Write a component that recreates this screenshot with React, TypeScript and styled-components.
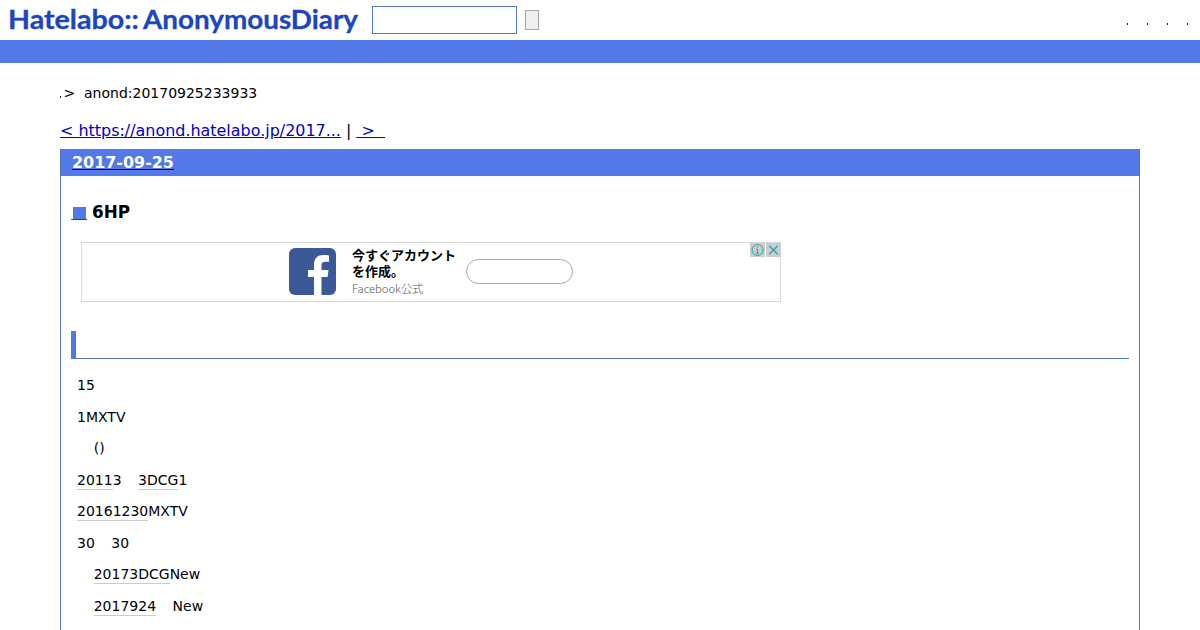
import React from 'react';
import styled, { createGlobalStyle } from 'styled-components';

const GlobalStyle = createGlobalStyle`
  html {
    overflow: hidden;
  }
  body {
    margin: 0;
    background: #fff;
    color: #000;
    font-family: 'DejaVu Sans', sans-serif;
    font-size: 14px;
  }
`;

const Page = styled.div`
  height: 630px;
  overflow: hidden;
  display: flex;
  flex-direction: column;
`;

const Header = styled.header`
  display: flex;
  align-items: flex-start;
  flex: none;
  height: 40px;
`;
const Logo = styled.svg`
  display: block;
  width: 372px;
  height: 40px;
  fill: #1c45c0;
  stroke: #1c45c0;
  stroke-width: 0.3px;
  font-family: Lato, sans-serif;
  font-weight: 700;
`;
const SearchInput = styled.input`
  box-sizing: border-box;
  width: 145px;
  height: 28px;
  margin: 6px 8px 0 0;
  border: 1px solid #5279c7;
  padding: 0 4px;
`;
const SearchButton = styled.button`
  box-sizing: border-box;
  width: 14px;
  height: 20px;
  margin-top: 10px;
  padding: 0;
  border: 1px solid #a9a9a9;
  background: #efefef;
`;
const Menu = styled.nav`
  display: flex;
  gap: 19px;
  margin-left: auto;
  padding: 23px 12px 0 0;
`;
const Dot = styled.span`
  width: 1px;
  height: 2px;
  background: #222;
`;
const BlueBar = styled.div`
  flex: none;
  height: 23px;
  background: #5279e7;
`;

const Main = styled.main`
  flex: 1;
  min-height: 0;
  display: flex;
  flex-direction: column;
  padding: 22px 60px 0;
`;
const Breadcrumb = styled.div`
  display: flex;
  align-items: baseline;
  height: 17px;
  line-height: 17px;
  white-space: pre;

  ${Dot} {
    margin-right: 2.4px;
  }
`;
const Pager = styled.div`
  height: 19px;
  line-height: 19px;
  margin: 19px 0 9px;
  font-size: 15.94px;
  white-space: pre;

  a {
    color: #0000cc;
  }
`;

const Day = styled.section`
  flex: 1;
  min-height: 0;
  border: 1px solid #5279b7;
  border-top-color: #5279e7;
  border-bottom: 0;
`;
const DayTitle = styled.h2`
  height: 26px;
  margin: 0;
  padding-left: 11px;
  background: #5279e7;
  font-size: 15.94px;
  line-height: 25px;

  a {
    color: #fff;
    text-decoration-color: #0000cc;
  }
`;
const Entry = styled.article`
  padding: 25px 10px 0;
`;
const EntryTitle = styled.h3`
  display: flex;
  align-items: flex-start;
  gap: 5px;
  height: 20px;
  margin: 0;
  font-size: 16.8px;
  line-height: 22px;
`;
const Permalink = styled.a`
  width: 16px;
  margin-top: 6px;
  border-bottom: 1px solid #2a3fae;

  &::before {
    content: '';
    display: block;
    width: 13px;
    height: 12px;
    margin-left: 2px;
    background: #5279e7;
  }
`;

const Ad = styled.aside`
  box-sizing: border-box;
  position: relative;
  display: flex;
  width: 700px;
  height: 60px;
  margin: 21px 0 29px 10px;
  padding: 5px 0 0 207px;
  border: 1px solid #d8d8d8;
  font-family: 'Noto Sans CJK JP', sans-serif;
`;
const AdCopy = styled.div`
  width: 114px;
  margin: -1px 0 0 16px;
`;
const AdTitle = styled.div`
  width: 106px;
  font-size: 13px;
  font-weight: 700;
  line-height: 16px;
`;
const AdSponsor = styled.div`
  color: #555;
  font-size: 11.2px;
  font-weight: 300;
  line-height: 18px;
`;
const AdButton = styled.div`
  box-sizing: border-box;
  width: 107px;
  height: 25px;
  margin-top: 11px;
  border: 1px solid #aaa;
  border-radius: 13px;
`;
const AdChoices = styled.div`
  position: absolute;
  top: 0;
  right: -1px;
  display: flex;
  gap: 1px;

  svg {
    display: block;
    background: #ccc;
    fill: none;
    stroke: #1fa5bd;
  }
`;

const SectionHeading = styled.h4`
  height: 27px;
  margin: 0 0 18px;
  border-left: 5px solid #5279e7;
  border-bottom: 1px solid #5279b7;
`;
const Paragraph = styled.p<{ $indent?: boolean }>`
  margin: 0 0 14px;
  padding-left: ${(p) => (p.$indent ? 22.7 : 6)}px;
  line-height: 17.5px;
`;
const Keyword = styled.a`
  padding-bottom: 1px;
  border-bottom: 1px solid #ccc;
`;
const Gap = styled.span`
  display: inline-block;
  width: 16.5px;
`;

const FacebookIcon = () => (
  <svg width='47' height='47' viewBox='0 0 47 47'>
    <rect width='47' height='47' rx='6' fill='#3b5998' />
    <path
      fill='#fff'
      d='M25 47V29h-6v-7h6v-5.500C25 10.300 28.700 7 34.300 7c2.400 0 4.700.2 5.700.4v6.400h-3.700c-3 0-3.800 1.500-3.800 3.700V22h7l-.9 7h-6.100v18z'
    />
  </svg>
);

const App: React.FC = () => {
  return (
    <Page>
      <GlobalStyle />
      <Header>
        <Logo>
          <text x='8' y='29' fontSize='26' textLength='131' lengthAdjust='spacingAndGlyphs'>
            Hatelabo::
          </text>
          <text x='143' y='29' fontSize='26' textLength='215' lengthAdjust='spacingAndGlyphs'>
            AnonymousDiary
          </text>
        </Logo>
        <SearchInput />
        <SearchButton />
        <Menu>
          <Dot />
          <Dot />
          <Dot />
          <Dot />
        </Menu>
      </Header>
      <BlueBar />
      <Main>
        <Breadcrumb>
          <Dot />
          {'>  anond:20170925233933'}
        </Breadcrumb>
        <Pager>
          <a href='#prev'>{'< https://anond.hatelabo.jp/2017...'}</a>
          {' | '}
          <a href='#next'>{' > \u00a0'}</a>
        </Pager>
        <Day>
          <DayTitle>
            <a href='#day'>2017-09-25</a>
          </DayTitle>
          <Entry>
            <EntryTitle>
              <Permalink href='#entry' />
              6HP
            </EntryTitle>
            <Ad>
              <FacebookIcon />
              <AdCopy>
                <AdTitle>今すぐアカウントを作成。</AdTitle>
                <AdSponsor>Facebook公式</AdSponsor>
              </AdCopy>
              <AdButton />
              <AdChoices>
                <svg width='15' height='14' viewBox='0 0 15 14'>
                  <circle cx='7.500' cy='7' r='5.500' />
                  <path d='M7.500 3.300v1.500M6.300 6.200h1.200v4M6 10.200h3' />
                </svg>
                <svg width='15' height='14' viewBox='0 0 15 14'>
                  <path d='M3.200 2.700l8.600 8.600M11.800 2.700l-8.600 8.600' strokeWidth='1.300' />
                </svg>
              </AdChoices>
            </Ad>
            <SectionHeading />
            <Paragraph>15</Paragraph>
            <Paragraph>1MXTV</Paragraph>
            <Paragraph $indent>()</Paragraph>
            <Paragraph>
              <Keyword>2011</Keyword>3<Gap />
              <Keyword>3DCG</Keyword>1
            </Paragraph>
            <Paragraph>
              <Keyword>20161230</Keyword>MXTV
            </Paragraph>
            <Paragraph>
              30
              <Gap />
              30
            </Paragraph>
            <Paragraph $indent>
              <Keyword>20173DCG</Keyword>New
            </Paragraph>
            <Paragraph $indent>
              <Keyword>2017924</Keyword>
              <Gap />
              New
            </Paragraph>
          </Entry>
        </Day>
      </Main>
    </Page>
  );
};
export default App;
